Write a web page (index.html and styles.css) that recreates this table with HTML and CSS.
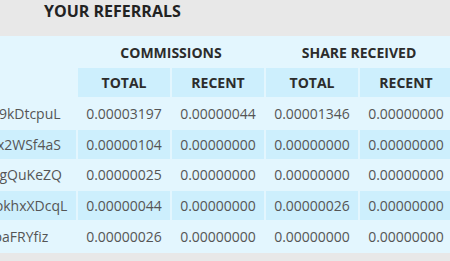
FILE: index.html
```html
<!DOCTYPE html>
<html lang="en">
<head>
<meta charset="utf-8">
<title>Your Referrals</title>
<link rel="stylesheet" href="styles.css">
</head>
<body>
<div class="page">
  <h2 class="title">YOUR REFERRALS</h2>
  <div class="panel">
    <table class="ref-table">
      <colgroup>
        <col class="col-user">
        <col class="col-num">
        <col class="col-num">
        <col class="col-num">
        <col class="col-num">
      </colgroup>
      <thead>
        <tr class="group-row">
          <th></th>
          <th colspan="2">COMMISSIONS</th>
          <th colspan="2">SHARE RECEIVED</th>
        </tr>
        <tr class="head-row">
          <th class="blank"></th>
          <th>TOTAL</th>
          <th>RECENT</th>
          <th>TOTAL</th>
          <th>RECENT</th>
        </tr>
      </thead>
      <tbody>
        <tr>
          <td class="user">1Lbcfr7sAHTD9CgdQo3Hi9kDtcpuL</td>
          <td>0.00003197</td><td>0.00000044</td><td>0.00001346</td><td>0.00000000</td>
        </tr>
        <tr class="alt">
          <td class="user">1NDyJtNTjmwkxPNhjgAMx2WSf4aS</td>
          <td>0.00000104</td><td>0.00000000</td><td>0.00000000</td><td>0.00000000</td>
        </tr>
        <tr>
          <td class="user">1FeexV6bAb8ybZjqQMjJrcgQuKeZQ</td>
          <td>0.00000025</td><td>0.00000000</td><td>0.00000000</td><td>0.00000000</td>
        </tr>
        <tr class="alt">
          <td class="user">1HLoD9E4SDFDiYfNYnkBpkhxXDcqL</td>
          <td>0.00000044</td><td>0.00000000</td><td>0.00000026</td><td>0.00000000</td>
        </tr>
        <tr>
          <td class="user">1KFHE7w8BhaENAsiyaocpaFRYfiz</td>
          <td>0.00000026</td><td>0.00000000</td><td>0.00000000</td><td>0.00000000</td>
        </tr>
      </tbody>
    </table>
  </div>
</div>
</body>
</html>
```

FILE: styles.css
```css
html, body {
  margin: 0;
  padding: 0;
  overflow: hidden;
  background: #e8e8e8;
}

.page {
  font-family: "Open Sans", "Liberation Sans", sans-serif;
  width: 450px;
}

.title {
  margin: 0;
  height: 36px;
  padding-left: 44px;
  font-size: 16px;
  line-height: 22px;
  font-weight: 700;
  color: #222;
  box-sizing: border-box;
}

.panel {
  background: #e3f6fe;
  margin-left: -180px;
  width: 634px;
}

.ref-table {
  border-collapse: separate;
  border-spacing: 2px;
  table-layout: fixed;
  width: 634px;
  font-size: 14px;
}

.col-user { width: 254px; }
.col-num { width: 92px; }

.ref-table th,
.ref-table td {
  padding: 0;
  text-align: center;
  white-space: nowrap;
}

.ref-table th {
  font-weight: 700;
  color: #2c2c2c;
}

.group-row th {
  height: 28px;
}

.head-row th {
  height: 29px;
  background: #cdeffd;
}

.head-row th.blank {
  background: transparent;
}

.ref-table td {
  height: 28.8px;
  color: #555;
}

.ref-table tr.alt td {
  background: #cdeffd;
}

.ref-table td.user {
  text-align: left;
  padding-left: 10px;
  overflow: hidden;
}
```
